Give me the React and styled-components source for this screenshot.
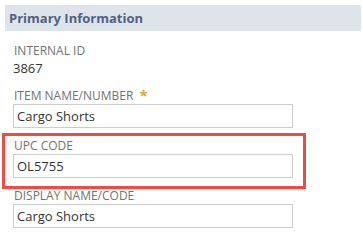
import styled, { createGlobalStyle } from 'styled-components';

const GlobalStyle = createGlobalStyle`
    body {
        margin: 0;
        background: #ffffff;
        font-family: "Open Sans", "Liberation Sans", sans-serif;
    }
`;

const Page = styled.div`
    padding: 5px 2px 0 5px;
`;

const SectionHeader = styled.div`
    height: 26px;
    line-height: 26px;
    background: #dfe4eb;
    color: #4f6283;
    font-size: 13px;
    font-weight: 700;
    padding-left: 4px;
`;

const FieldList = styled.div`
    display: flex;
    flex-direction: column;
    padding: 12px 0 0 8px;
`;

const Field = styled.div`
    position: relative;
    width: 280px;
    margin-bottom: ${(p) => p.$gap || 10}px;

    ${(p) =>
        p.$highlight &&
        `
        &::after {
            content: '';
            position: absolute;
            left: -11px;
            top: -5px;
            right: -13px;
            bottom: -11px;
            border: 3px solid #ea4d45;
            pointer-events: none;
        }
    `}
`;

const Label = styled.div`
    font-size: 12px;
    line-height: 16px;
    color: #737373;
    padding-left: 1px;
    white-space: nowrap;
`;

const Required = styled.span`
    color: #eaa237;
    font-weight: 700;
    font-size: 15px;
    margin-left: 6px;
    vertical-align: -1px;
    line-height: 0;
`;

const Value = styled.div`
    font-size: 13px;
    line-height: 19px;
    color: #333333;
`;

const Input = styled.input`
    box-sizing: border-box;
    display: block;
    width: 280px;
    height: 24px;
    margin: 0;
    padding: 0 3px;
    border: 1px solid #cccccc;
    border-radius: 0;
    font-family: "Open Sans", "Liberation Sans", sans-serif;
    font-size: 13px;
    color: #333333;
    background: #ffffff;
    outline: none;
`;

export default function App() {
    return (
        <Page>
            <GlobalStyle />
            <SectionHeader>Primary Information</SectionHeader>
            <FieldList>
                <Field $gap={10}>
                    <Label>INTERNAL ID</Label>
                    <Value>3867</Value>
                </Field>
                <Field>
                    <Label>
                        ITEM NAME/NUMBER<Required>*</Required>
                    </Label>
                    <Input defaultValue="Cargo Shorts" />
                </Field>
                <Field $highlight>
                    <Label>UPC CODE</Label>
                    <Input defaultValue="OL5755" />
                </Field>
                <Field>
                    <Label>DISPLAY NAME/CODE</Label>
                    <Input defaultValue="Cargo Shorts" />
                </Field>
            </FieldList>
        </Page>
    );
}
